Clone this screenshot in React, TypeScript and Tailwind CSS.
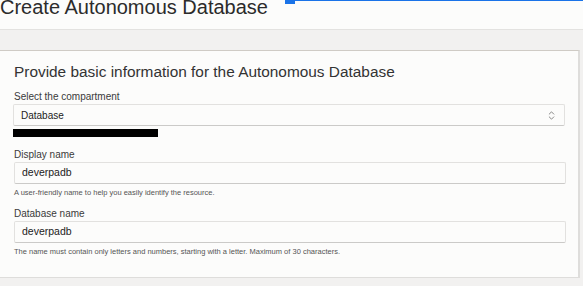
import { ChevronsUpDown } from "lucide-react"

function Field({ label, value, help }: { label: string; value: string; help: string }) {
    return (
        <div className="flex flex-col">
            <label className="text-[10px] leading-[12px] text-[#3a3a3a]">{label}</label>
            <div className="mt-[1px] h-[22px] w-[552px] flex items-center pl-[7px] bg-[#fcfcfb] border border-[#e2e1df] border-b-[#cbcac8] rounded-[2px] text-[10.5px] text-[#222]">
                {value}
            </div>
            <p className="mt-[4px] text-[7.5px] leading-[9px] text-[#555]">{help}</p>
        </div>
    )
}

export default function App() {
    return (
        <div className="relative w-[583px] h-[286px] overflow-hidden bg-[#fcfcfb] font-['Liberation_Sans',Arial,sans-serif]">
            {/* selection marker on top */}
            <div className="absolute top-0 left-[285px] right-0 h-px bg-[#1a73e8]"></div>
            <div className="absolute top-0 left-[285px] w-[10px] h-[4px] bg-[#1a73e8]"></div>

            <h1 className="h-[29px] -mt-[2px] text-[20px] leading-[19px] text-[#2b2b2b]">Create Autonomous Database</h1>

            <div className="mt-[2px] h-[257px] border-t border-[#e3e2e0] bg-[#f2f1f0] pt-[20px] pr-[3px]">
                <div className="h-[228px] border-t border-[#cfcbc5] border-r-2 border-r-[#dedddb] border-b border-b-[#dedddb] bg-[#fcfcfb] px-[13px] pt-[12px]">
                    <h2 className="text-[15.4px] leading-[17px] text-[#333] pl-px">Provide basic information for the Autonomous Database</h2>

                    <div className="mt-[11px] flex flex-col">
                        <label className="pl-px text-[10px] leading-[12px] text-[#3a3a3a]">Select the compartment</label>
                        <div className="mt-[1px] h-[22px] w-[552px] flex items-center justify-between pl-[7px] pr-[7px] bg-[#fcfcfb] border border-[#e2e1df] border-b-[#cbcac8] rounded-[2px] text-[10px] text-[#222]">
                            <span>Database</span>
                            <ChevronsUpDown size={11} strokeWidth={1.5} color="#555" />
                        </div>
                        <div className="mt-[3px] w-[145px] h-[8px] bg-black"></div>
                    </div>

                    <div className="mt-[12px] pl-px">
                        <Field
                            label="Display name"
                            value="deverpadb"
                            help="A user-friendly name to help you easily identify the resource."
                        />
                    </div>

                    <div className="mt-[11px] pl-px">
                        <Field
                            label="Database name"
                            value="deverpadb"
                            help="The name must contain only letters and numbers, starting with a letter. Maximum of 30 characters."
                        />
                    </div>
                </div>
            </div>
        </div>
    )
}
